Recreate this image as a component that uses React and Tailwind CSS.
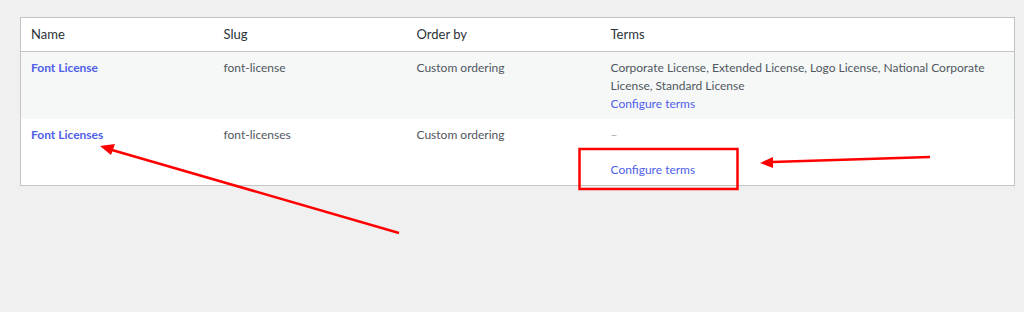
import React from "react";

const rows = [
  {
    name: "Font License",
    slug: "font-license",
    order: "Custom ordering",
    terms: "Corporate License, Extended License, Logo License, National Corporate License, Standard License",
  },
  {
    name: "Font Licenses",
    slug: "font-licenses",
    order: "Custom ordering",
    terms: null,
  },
];

function Markup() {
  return (
    <svg className="pointer-events-none absolute left-0 top-0" width="1024" height="312" viewBox="0 0 1024 312">
      <rect x="579.5" y="149" width="158" height="40" fill="none" stroke="#ff0000" strokeWidth="2.5" />
      <line x1="399" y1="233" x2="112" y2="150" stroke="#ff0000" strokeWidth="2.5" />
      <polygon points="100,146 115,144 111,155" fill="#ff0000" />
      <line x1="930" y1="157" x2="772" y2="162" stroke="#ff0000" strokeWidth="2.5" />
      <polygon points="760,163 773,157 773,168" fill="#ff0000" />
    </svg>
  );
}

export default function App() {
  return (
    <div
      className="relative h-[312px] w-[1024px] overflow-hidden bg-[#f0f0f1] pl-[20px] pt-[17px] text-[12px] text-[#50575e]"
      style={{ fontFamily: 'Lato, "Noto Sans", sans-serif' }}
    >
      <table className="w-[995px] table-fixed border-collapse border border-[#c3c4c7] bg-white">
        <colgroup>
          <col className="w-[193px]" />
          <col className="w-[193px]" />
          <col className="w-[194px]" />
          <col />
        </colgroup>
        <thead>
          <tr className="h-[34px] border-b border-[#c3c4c7] text-left text-[13px] text-[#2c3338]">
            <th className="px-[10px] font-normal">Name</th>
            <th className="px-[10px] font-normal">Slug</th>
            <th className="px-[10px] font-normal">Order by</th>
            <th className="px-[10px] font-normal">Terms</th>
          </tr>
        </thead>
        <tbody>
          {rows.map((row, i) => (
            <tr key={row.slug} className={i % 2 === 0 ? "h-[67px] bg-[#f6f7f7]" : "h-[67px] bg-white"}>
              <td className="px-[10px] pt-[7px] align-top leading-[18px]">
                <a href="#" className="font-bold text-[#4f5fe8]">
                  {row.name}
                </a>
              </td>
              <td className="px-[10px] pt-[7px] align-top leading-[18px]">{row.slug}</td>
              <td className="px-[10px] pt-[7px] align-top leading-[18px]">{row.order}</td>
              <td className="px-[10px] pt-[7px] align-top leading-[18px]">
                {row.terms ? (
                  <p>{row.terms}</p>
                ) : (
                  <p className="mb-[17px] text-[#a7aaad]">–</p>
                )}
                <a href="#" className="text-[#4f5fe8]">
                  Configure terms
                </a>
              </td>
            </tr>
          ))}
        </tbody>
      </table>
      <Markup />
    </div>
  );
}
